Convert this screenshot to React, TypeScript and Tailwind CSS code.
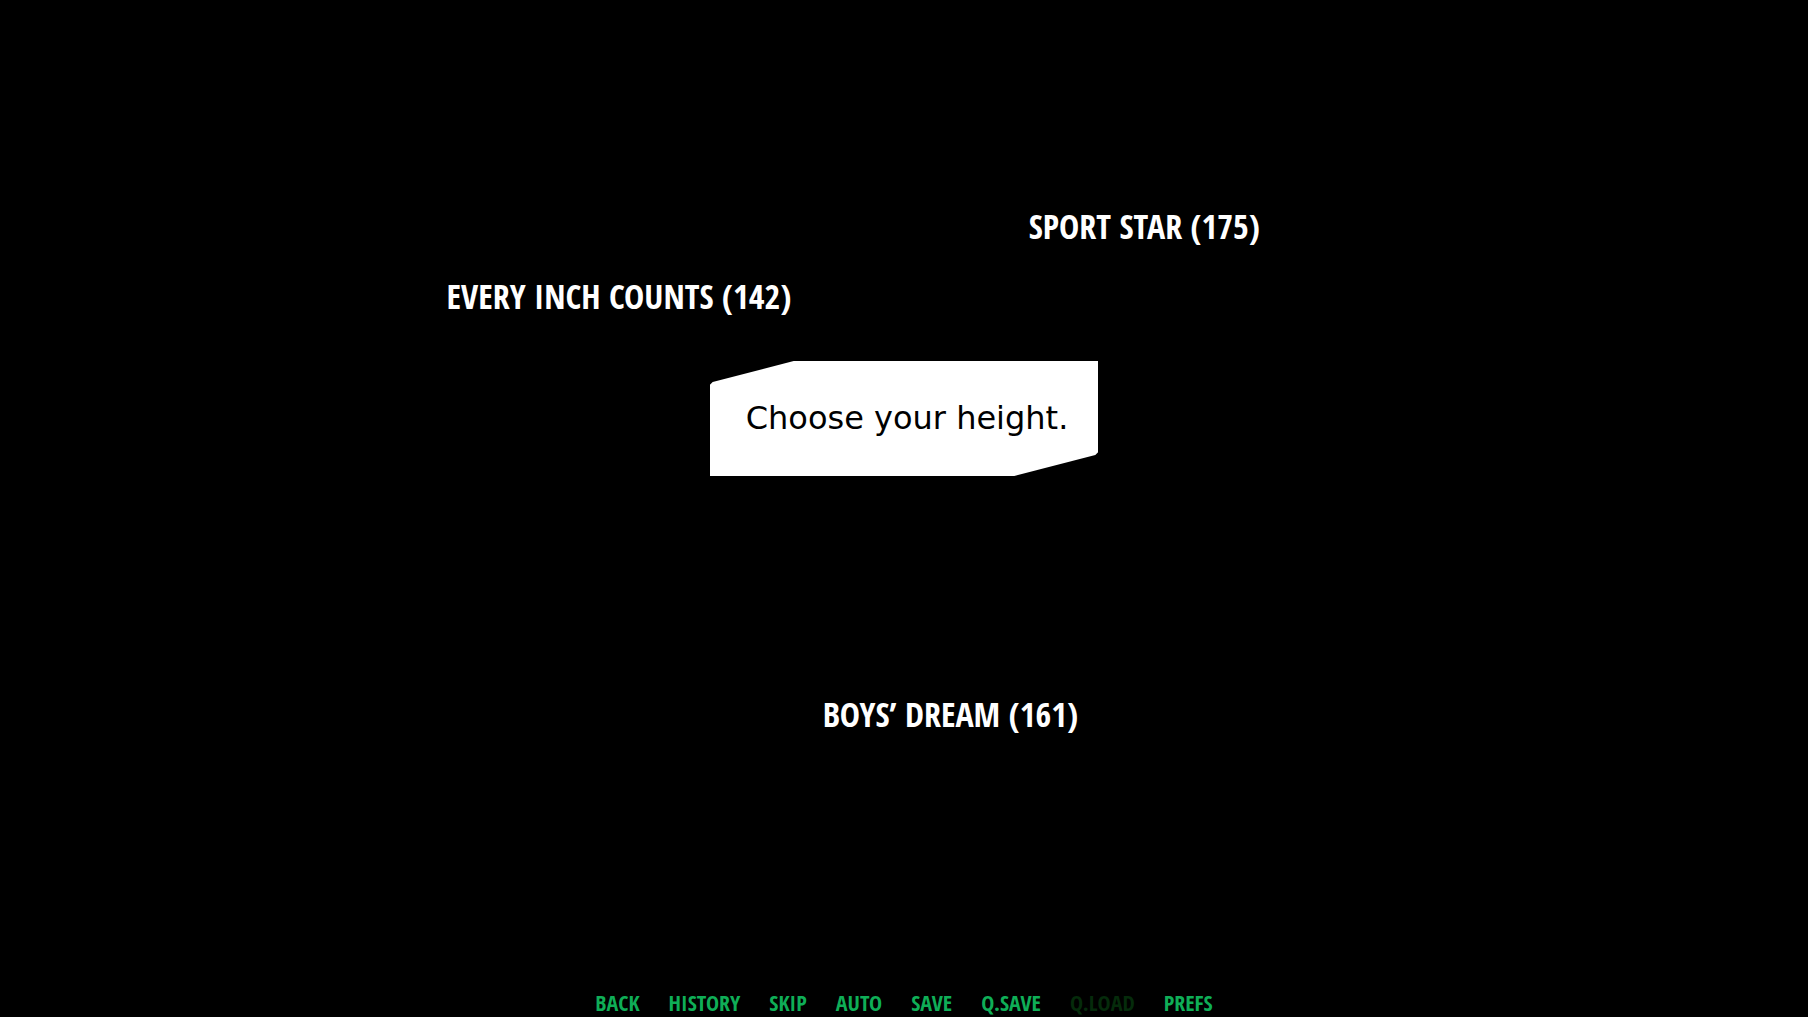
import { useState } from "react";
import clsx from "clsx";

const QUICK_MENU = [
    { label: "Back" },
    { label: "History" },
    { label: "Skip" },
    { label: "Auto" },
    { label: "Save" },
    { label: "Q.Save" },
    { label: "Q.Load", disabled: true },
    { label: "Prefs" },
];

function Choice({ label, onPick }: { label: string; onPick: (label: string) => void }) {
    return (
        <button
            type="button"
            onClick={() => onPick(label)}
            className="block cursor-pointer whitespace-nowrap text-[34px] leading-10 font-bold uppercase text-white hover:text-[#0fae57]"
        >
            {label}
        </button>
    );
}

export default function App() {
    const [, setPicked] = useState<string | null>(null);

    return (
        <div className="flex min-h-screen flex-col bg-black font-['Open_Sans_Condensed','Roboto_Condensed',sans-serif]">
            <main className="flex flex-1 flex-col items-start pt-[206px]">
                <div className="pl-[56.9%]">
                    <Choice label="Sport star (175)" onPick={setPicked} />
                </div>
                <div className="mt-[30px] pl-[24.7%]">
                    <Choice label="Every inch counts (142)" onPick={setPicked} />
                </div>

                {/* Speech bubble with two slanted corners */}
                <div className="mt-[45px] self-center bg-white py-9 pl-9 pr-[30px] [clip-path:polygon(0_24px,3px_21px,84px_0,100%_0,100%_calc(100%-24px),calc(100%-3px)_calc(100%-21px),calc(100%-84px)_100%,0_100%)]">
                    <h1 className="font-['DejaVu_Sans',sans-serif] text-[32px] leading-[43px] text-black">
                        Choose your height.
                    </h1>
                </div>

                <div className="mt-[218px] pl-[45.5%]">
                    <Choice label="Boys’ dream (161)" onPick={setPicked} />
                </div>
            </main>

            <nav className="flex justify-center gap-[29px]">
                {QUICK_MENU.map(({ label, disabled }) => (
                    <button
                        key={label}
                        type="button"
                        disabled={disabled}
                        className={clsx(
                            "text-[22px] leading-[30px] font-bold uppercase",
                            disabled ? "text-[#052b0b]" : "cursor-pointer text-[#0fae57] hover:text-white"
                        )}
                    >
                        {label}
                    </button>
                ))}
            </nav>
        </div>
    );
}
